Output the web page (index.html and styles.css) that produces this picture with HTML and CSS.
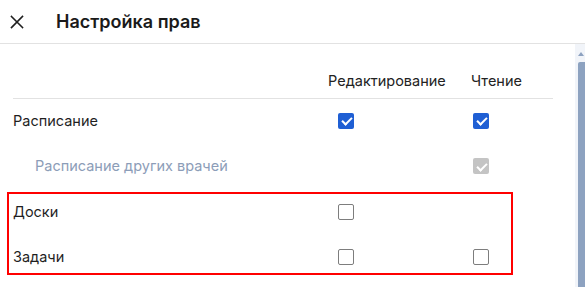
FILE: index.html
```html
<!DOCTYPE html>
<html lang="ru">
<head>
<meta charset="utf-8">
<link rel="stylesheet" href="styles.css">
</head>
<body>
<div class="dialog">
  <header class="head">
    <button class="close" aria-label="Закрыть">
      <svg width="14" height="14" viewBox="0 0 14 14"><path d="M1.5 1.5 L12.5 12.5 M12.5 1.5 L1.5 12.5" stroke="#1f1f1f" stroke-width="1.6" stroke-linecap="square" fill="none"/></svg>
    </button>
    <h1 class="title">Настройка прав</h1>
  </header>
  <div class="body">
    <div class="content">
      <div class="grid">
        <div class="th"></div>
        <div class="th th-edit">Редактирование</div>
        <div class="th th-read">Чтение</div>

        <div class="td label">Расписание</div>
        <div class="td cell-edit"><span class="cb checked"></span></div>
        <div class="td cell-read"><span class="cb checked"></span></div>

        <div class="td label sub">Расписание других врачей</div>
        <div class="td cell-edit"></div>
        <div class="td cell-read"><span class="cb disabled"></span></div>

        <div class="td label">Доски</div>
        <div class="td cell-edit"><span class="cb"></span></div>
        <div class="td cell-read"></div>

        <div class="td label">Задачи</div>
        <div class="td cell-edit"><span class="cb"></span></div>
        <div class="td cell-read"><span class="cb"></span></div>
      </div>
      <div class="highlight"></div>
    </div>
    <div class="scrollbar">
      <span class="arrow"></span>
      <span class="thumb"></span>
    </div>
  </div>
</div>
</body>
</html>
```

FILE: styles.css
```css
* { box-sizing: border-box; }
html, body { margin: 0; padding: 0; background: #fff; }
body {
  font-family: Inter, "Noto Sans", sans-serif;
  color: #1f1f1f;
  width: 585px;
  height: 287px;
  overflow: hidden;
}
.dialog { display: flex; flex-direction: column; height: 287px; }
.head {
  height: 44px;
  border-bottom: 1px solid #e2e2e2;
  display: flex;
  align-items: center;
  padding-left: 10px;
  flex: none;
}
.close {
  border: 0;
  background: none;
  padding: 0;
  width: 14px;
  height: 14px;
  margin-top: 1px;
  display: flex;
}
.title {
  margin: 0 0 0 32px;
  font-size: 18px;
  font-weight: 600;
  line-height: 24px;
  color: #1a1a1a;
}
.body { flex: 1; display: flex; min-height: 0; }
.content { flex: 1; position: relative; padding: 0 22px 0 13px; }
.grid {
  display: grid;
  grid-template-columns: 315px 133px 92px;
  grid-template-rows: 55px;
  grid-auto-rows: 45.5px;
}
.th {
  padding-top: 27px;
  font-size: 14.5px;
  line-height: 20px;
  border-bottom: 1px solid #e2e2e2;
  color: #222;
}
.th-read { padding-left: 10px; }
.td {
  display: flex;
  align-items: center;
  font-size: 14.5px;
  line-height: 20px;
  padding-bottom: 2px;
}
.label.sub { padding-left: 22px; color: #8c9db8; }
.cell-edit { padding-left: 10px; }
.cell-read { padding-left: 12px; }
.cb {
  width: 16px;
  height: 16px;
  border-radius: 2px;
  border: 1.5px solid #7d7d7d;
  position: relative;
  display: block;
}
.cb.checked, .cb.disabled {
  border: 0;
  background: #1f5fd4;
}
.cb.disabled { background: #c4c4c4; }
.cb.checked::after, .cb.disabled::after {
  content: "";
  position: absolute;
  left: 5.5px;
  top: 2.5px;
  width: 4px;
  height: 8px;
  border-right: 2px solid #fff;
  border-bottom: 2px solid #fff;
  transform: rotate(45deg);
}
.highlight {
  position: absolute;
  left: 7px;
  top: 148px;
  width: 506px;
  height: 83px;
  border: 2.5px solid #ff0000;
  pointer-events: none;
}
.scrollbar {
  width: 10px;
  flex: none;
  background: #f1f4f9;
  position: relative;
}
.arrow {
  position: absolute;
  left: 3px;
  top: 8px;
  width: 0;
  height: 0;
  border-left: 3.5px solid transparent;
  border-right: 3.5px solid transparent;
  border-bottom: 4px solid #8da2c0;
}
.thumb {
  position: absolute;
  left: 3px;
  right: 0;
  top: 18px;
  bottom: 0;
  background: #8da2c0;
  border-radius: 2px 0 0 0;
}
```
